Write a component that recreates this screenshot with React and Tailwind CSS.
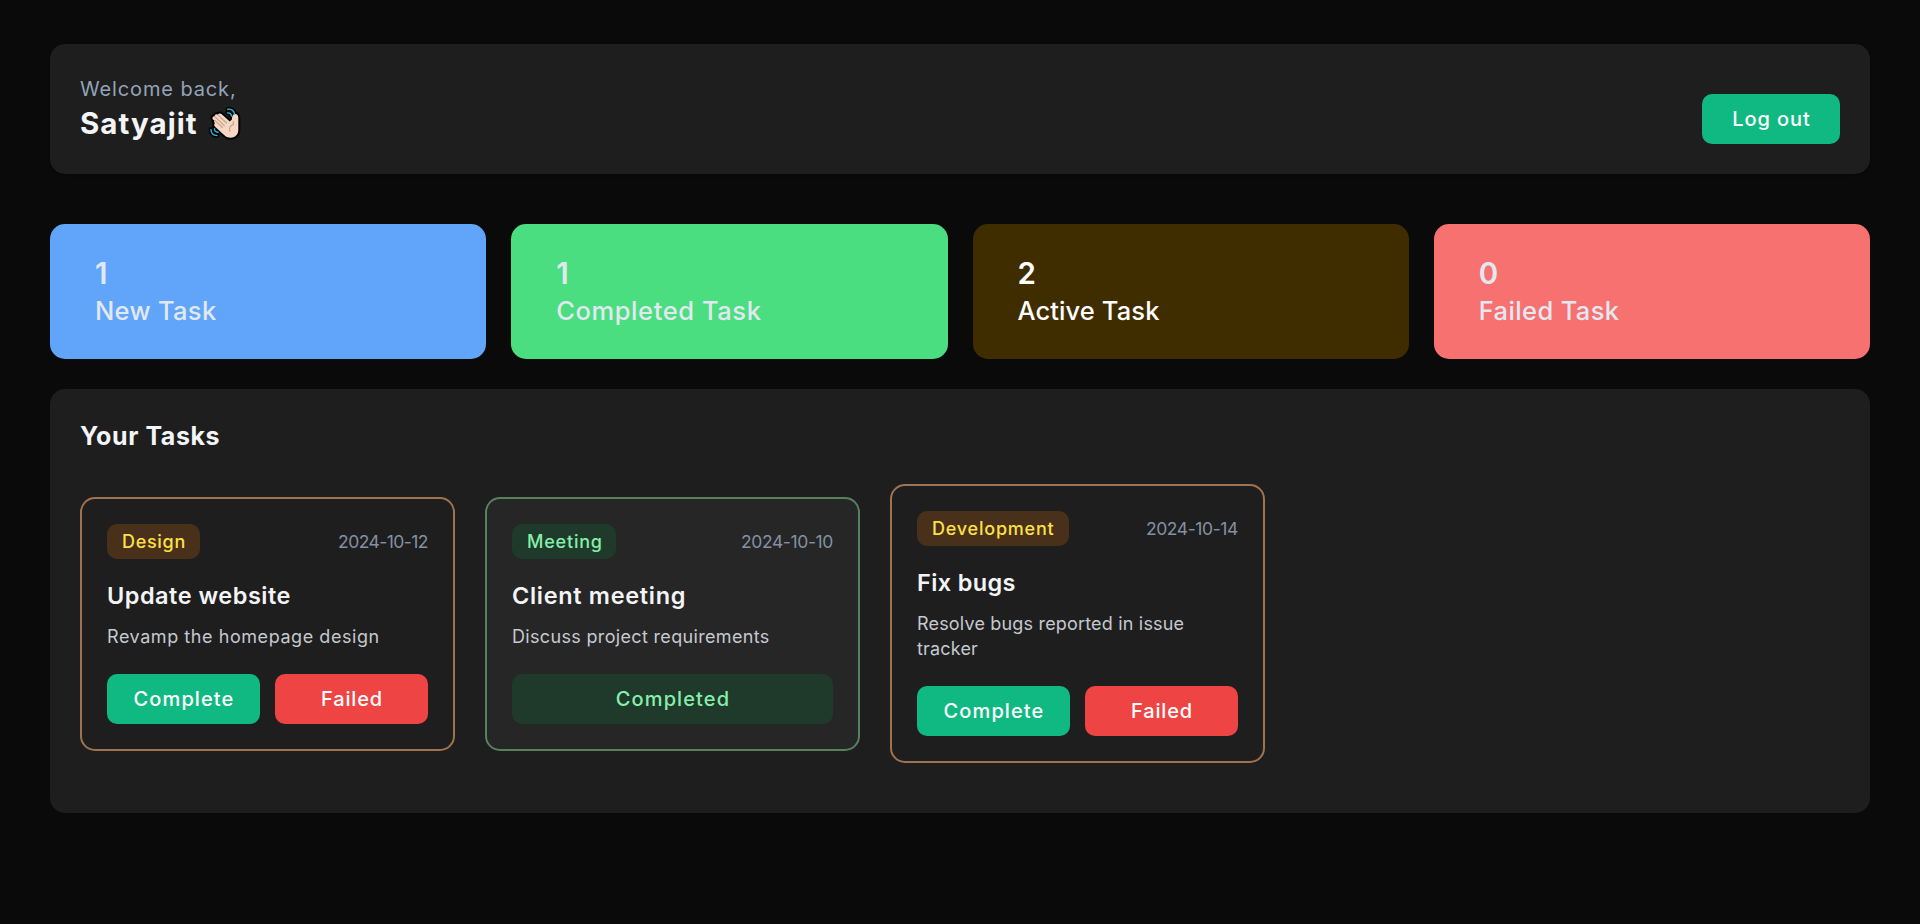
const stats = [
  { value: 1, label: 'New Task', card: 'bg-[#60a5fa] text-[#e2e8f0]', text: 'tracking-[0.3px]' },
  { value: 1, label: 'Completed Task', card: 'bg-[#4ade80] text-[#e2e8f0]', text: 'tracking-[0.58px]' },
  { value: 2, label: 'Active Task', card: 'bg-[#3f2d00] text-white', text: 'tracking-[0.1px]' },
  { value: 0, label: 'Failed Task', card: 'bg-[#f87171] text-[#e2e8f0]', text: 'tracking-[0.37px]' },
];

const HAND =
  'M5.500 13.500C5.200 12 6.300 11 7.600 11.300C7.700 9.300 9.500 8.600 10.900 9.700C11.600 8.200 13.200 8 14.400 9.100L22.800 16.600L24.900 14.500C25.100 11 25.800 8.900 28.200 8.900C30.300 8.900 31.300 10.500 31.300 13V25C31.300 29.700 28 32.700 23.700 32.700C20.800 32.700 18.600 31.500 16.800 29.700L8.100 21.700C6.900 20.500 6.900 19.300 8 18.300C6.900 17.200 6.800 16.200 7.600 15.200C6.500 15 5.700 14.500 5.500 13.500Z';
const WAVES =
  'M20.800 4.300C24.300 3.600 27 5.700 27.600 9M20.500 7.900C22.700 7.700 24.200 8.900 24.500 11M4 24.500C3.800 28 6.500 30.700 10 30.500M7.400 23.800C7.500 26 9 27.300 11.200 27.200';

function WavingHand({ className }) {
  return (
    <svg viewBox="0 0 38 38" className={className} fill="none" strokeLinecap="round" strokeLinejoin="round">
      <path d={WAVES} stroke="#000" strokeWidth="4.600" />
      <path d={HAND} fill="#000" stroke="#000" strokeWidth="4" />
      <path d={HAND} fill="#f7d7c4" />
      <path d="M10.900 9.900L19.500 18M7.800 11.600L17.300 20.600M7.700 15.400L15.300 22.300M26.300 16.500V19.700C23 20.500 21.800 23.500 22.900 26.500" stroke="#c6a48a" strokeWidth="1.200" />
      <path d={WAVES} stroke="#2fb4dc" strokeWidth="1.400" />
    </svg>
  );
}

const tasks = [
  {
    tag: 'Design', tagText: 'w-[93px] tracking-[0.7px]', date: '2024-10-12', dateText: 'tracking-[-0.55px]',
    title: 'Update website', titleText: 'tracking-[0.5px]',
    body: 'Revamp the homepage design', bodyText: 'tracking-[0.56px]',
  },
  {
    tag: 'Meeting', tagText: 'w-[104px] tracking-[0.8px]', date: '2024-10-10', dateText: 'tracking-[-0.38px]',
    title: 'Client meeting', titleText: 'tracking-[0.68px]',
    body: 'Discuss project requirements', bodyText: 'tracking-[0.33px]', done: true,
  },
  {
    tag: 'Development', tagText: 'w-[152px] tracking-[0.78px]', date: '2024-10-14', dateText: 'tracking-[-0.4px]',
    title: 'Fix bugs', titleText: 'tracking-[0.37px]',
    body: 'Resolve bugs reported in issue tracker', bodyText: 'tracking-[0.18px]',
  },
];

function TaskCard({ task }) {
  return (
    <article className={`w-[375px] rounded-[15px] border-2 p-[25px] ${task.done ? 'border-[#568060] bg-[#262626]' : 'border-[#a07350]'}`}>
      <div className="flex h-[35px] items-center justify-between">
        <span className={`h-[35px] whitespace-nowrap rounded-[10px] pl-[15px] text-[18px] font-medium leading-[35px] ${task.tagText} ${task.done ? 'bg-[#1f3a2a] text-[#86efac]' : 'bg-[#49301a] text-[#fde047]'}`}>
          {task.tag}
        </span>
        <span className={`h-[35px] pt-px text-[17.5px] leading-[34px] text-[#8391a3] ${task.dateText}`}>{task.date}</span>
      </div>
      <h3 className={`mt-[19px] text-[23.5px] font-semibold leading-[35px] text-[#f3f4f6] ${task.titleText}`}>{task.title}</h3>
      <p className={`mt-[11px] text-[18px] leading-[25px] text-[#c5c9d0] ${task.bodyText}`}>{task.body}</p>
      {task.done ? (
        <div className="mt-[25px] h-[50px] rounded-[10px] bg-[#1f3a2a] pl-px text-center text-[20px] font-medium leading-[50px] tracking-[1.1px] text-[#86efac]">
          Completed
        </div>
      ) : (
        <div className="mt-[25px] flex gap-[15px] text-[20px] font-medium leading-[50px] text-white">
          <button className="h-[50px] flex-1 rounded-[10px] bg-[#10b981] pl-px tracking-[1.1px]">Complete</button>
          <button className="h-[50px] flex-1 rounded-[10px] bg-[#ef4444] pl-px tracking-[0.85px]">Failed</button>
        </div>
      )}
    </article>
  );
}

export default function App() {
  return (
    <div className="min-h-screen bg-[#0a0a0a] px-[50px] pt-[44px] font-['Inter',sans-serif]">
      <header className="flex h-[130px] items-end justify-between rounded-[15px] bg-[#1e1e1e] p-[30px] shadow-sm">
        <div>
          <p className="text-[20px] leading-[30px] tracking-[0.87px] text-[#94a3b8]">Welcome back,</p>
          <h1 className="flex h-[40px] items-center gap-[9px] text-[29.5px] font-bold leading-[38px] tracking-[1.05px] text-[#f3f4f6]">
            <span className="h-[40px]">Satyajit</span>
            <WavingHand className="h-[38px] w-[38px]" />
          </h1>
        </div>
        <button className="h-[50px] w-[138px] rounded-[10px] bg-[#10b981] pl-px text-[20px] font-medium tracking-[0.9px] text-white">Log out</button>
      </header>

      <section className="mt-[50px] grid grid-cols-4 gap-[25px]">
        {stats.map((s) => (
          <div key={s.label} className={`h-[135px] rounded-[15px] px-[45px] pt-[29px] ${s.card}`}>
            <div className="text-[29.5px] font-semibold leading-[40px]">{s.value}</div>
            <div className={`text-[25.5px] font-medium leading-[35px] ${s.text}`}>{s.label}</div>
          </div>
        ))}
      </section>

      <section className="mt-[30px] rounded-[15px] bg-[#1e1e1e] p-[30px]">
        <h2 className="text-[25px] font-bold leading-[35px] tracking-[0.57px] text-[#f3f4f6]">Your Tasks</h2>
        <div className="mb-5 mt-[30px] flex items-center gap-[30px]">
          {tasks.map((t) => <TaskCard key={t.title} task={t} />)}
        </div>
      </section>
    </div>
  );
}
